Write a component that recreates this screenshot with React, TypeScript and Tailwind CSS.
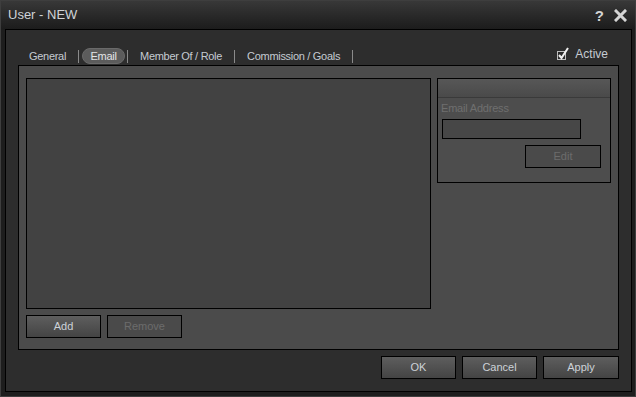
const font = { fontFamily: '"Liberation Sans", Arial, sans-serif' };

function Btn({ label, disabled, w }: { label: string; disabled?: boolean; w: string }) {
  return (
    <button
      type="button"
      className={
        disabled
          ? `${w} h-[23px] border border-black bg-[#4a4a4a] text-[11px] text-[#6c6c6c]`
          : `${w} h-[23px] border border-black bg-gradient-to-b from-[#5e5e5e] to-[#444444] text-[11px] text-[#cdd2d8]`
      }
    >
      {label}
    </button>
  );
}

function Sep() {
  return <span className="h-[13px] w-px bg-[#8a8a8a]" />;
}

export default function App() {
  return (
    <div
      style={font}
      className="flex h-[397px] w-[636px] flex-col border border-[#3e3e3e] bg-[#1d1d1d] antialiased"
    >
      <div className="flex h-[28px] items-center justify-between bg-gradient-to-b from-[#383838] to-[#1c1c1c] pl-[7px] pr-[8px]">
        <span className="text-[13px] text-[#cfd3d8]">User - NEW</span>
        <div className="flex items-center gap-[10px]">
          <span className="text-[15px] font-bold leading-none text-[#d4d4d4]">?</span>
          <svg width="13" height="13" viewBox="0 0 13 13">
            <path d="M2 2 L11 11 M11 2 L2 11" stroke="#d4d4d4" strokeWidth="3" strokeLinecap="square" />
          </svg>
        </div>
      </div>

      <div className="ml-[4px] mr-[3px] flex h-[363px] flex-col border border-black bg-[#2d2d2d] px-[12px] pb-[12px] pt-[17px]">
        <div className="flex h-[18px] items-center text-[11px] tracking-[-0.3px] text-[#c5cbd2]">
          <span className="ml-[11px] mr-[12px]">General</span>
          <Sep />
          <span className="ml-[3px] mr-[2px] flex h-[16px] w-[43px] items-center justify-center rounded-full border border-[#6a6a6a] bg-[#5c5c5c] text-[#e2e4e6]">
            Email
          </span>
          <Sep />
          <span className="mx-[12px]">Member Of / Role</span>
          <Sep />
          <span className="mx-[12px]">Commission / Goals</span>
          <Sep />
          <div className="ml-auto mr-[11px] flex -translate-y-[2px] items-center gap-[5px]">
            <svg width="14" height="14" viewBox="0 0 14 14">
              <rect x="1.5" y="4.5" width="8" height="8" fill="#2a2a2a" stroke="#bdbdbd" />
              <path d="M3 8 L5.5 11 L12 1" stroke="#f0f0f0" strokeWidth="2" fill="none" />
            </svg>
            <span className="text-[12px] tracking-normal text-[#c5cbd2]">Active</span>
          </div>
        </div>

        <div className="flex h-[285px] flex-col border border-black bg-[#4b4b4b] pb-[11px] pl-[7px] pr-[7px] pt-[12px]">
          <div className="flex gap-[6px]">
            <div className="h-[231px] w-[405px] border border-black bg-[#424242]" />
            <div className="flex h-[105px] w-[174px] flex-col border border-black bg-[#4d4d4d]">
              <div className="h-[19px] border-b border-[#3a3a3a] bg-gradient-to-b from-[#575757] to-[#4a4a4a]" />
              <span className="ml-[3px] mt-[4px] text-[11px] leading-[13px] tracking-[-0.2px] text-[#6f6f6f]">
                Email Address
              </span>
              <div className="ml-[4px] mt-[4px] h-[20px] w-[139px] border border-black bg-[#474747]" />
              <div className="mr-[9px] mt-[6px] flex justify-end">
                <Btn label="Edit" disabled w="w-[76px]" />
              </div>
            </div>
          </div>
          <div className="mt-[6px] flex gap-[6px]">
            <Btn label="Add" w="w-[75px]" />
            <Btn label="Remove" disabled w="w-[75px]" />
          </div>
        </div>

        <div className="mt-[6px] flex justify-end gap-[6px]">
          <Btn label="OK" w="w-[75px]" />
          <Btn label="Cancel" w="w-[75px]" />
          <Btn label="Apply" w="w-[76px]" />
        </div>
      </div>
    </div>
  );
}
